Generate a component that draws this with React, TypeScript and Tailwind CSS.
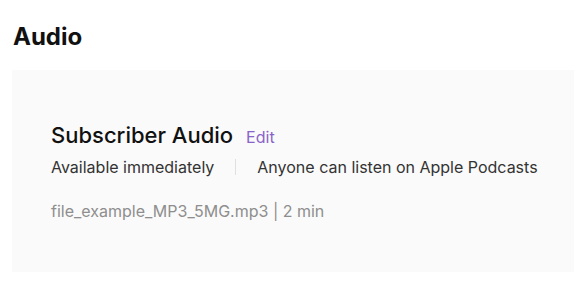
import React from 'react';

const App: React.FC = () => {
    return (
        <div className="min-h-screen bg-white" style={{ fontFamily: 'Inter, "Noto Sans", sans-serif' }}>
            <div className="pl-[13px] pt-[21px]">
                <h2 className="text-[24px] leading-[32px] font-bold text-[#111]">Audio</h2>
            </div>

            <div className="mt-[17px] ml-[12px] bg-[#fafafa] pl-[39px] pt-[51px] pb-[50px]">
                <div className="flex items-baseline gap-[13px]">
                    <h3 className="text-[22px] leading-[28px] font-medium text-[#111]">Subscriber Audio</h3>
                    <button className="text-[16px] leading-[24px] text-[#8a63c9]">Edit</button>
                </div>

                <div className="mt-[6px] flex items-center text-[16px] leading-[24px] text-[#333]">
                    <span>Available immediately</span>
                    <span className="mx-[21px] h-[16px] w-px bg-[#e0e0e0]" />
                    <span>Anyone can listen on Apple Podcasts</span>
                </div>

                <p className="mt-[21px] text-[16px] leading-[22px] text-[#8e8e8e]">
                    file_example_MP3_5MG.mp3 | 2 min
                </p>
            </div>
        </div>
    );
};

export default App;
